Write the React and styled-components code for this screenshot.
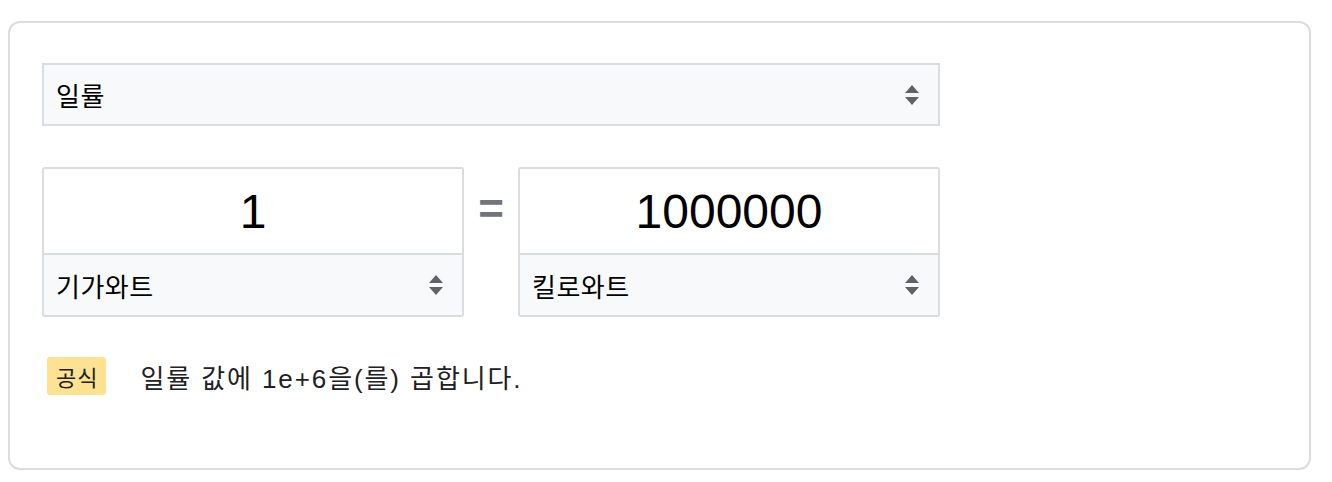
import React from "react";
import styled, { createGlobalStyle } from "styled-components";

const GlobalStyle = createGlobalStyle`
  body {
    margin: 8px;
    background: #fff;
    font-family: "Liberation Sans", Arial, "Noto Sans CJK KR", sans-serif;
    color: #202124;
  }
`;

const Arrows = () => (
  <svg width="16" height="22" viewBox="0 0 16 22">
    <path d="M1 9 L8 1 L15 9 Z" fill="#5f6368" />
    <path d="M1 13 L8 21 L15 13 Z" fill="#5f6368" />
  </svg>
);

const App = () => {
  return (
    <>
      <GlobalStyle />
      <Card>
        <Content>
          <Select tall>
            <SelectText>일률</SelectText>
            <Arrows />
          </Select>
          <ConverterRow>
            <UnitBox>
              <ValueInput>1</ValueInput>
              <Select>
                <SelectText>기가와트</SelectText>
                <Arrows />
              </Select>
            </UnitBox>
            <Equals>=</Equals>
            <UnitBox>
              <ValueInput>1000000</ValueInput>
              <Select>
                <SelectText>킬로와트</SelectText>
                <Arrows />
              </Select>
            </UnitBox>
          </ConverterRow>
          <FormulaRow>
            <Badge>공식</Badge>
            <FormulaText>일률 값에 1e+6을(를) 곱합니다.</FormulaText>
          </FormulaRow>
        </Content>
      </Card>
    </>
  );
};

const Card = styled.div`
  box-sizing: border-box;
  width: 1303px;
  height: 449px;
  margin-top: 13px;
  border: 2px solid #dadce0;
  border-radius: 12px;
  padding: 40px 32px;
`;

const Content = styled.div`
  width: 898px;
  display: flex;
  flex-direction: column;
`;

const Select = styled.div`
  box-sizing: border-box;
  display: flex;
  align-items: center;
  justify-content: space-between;
  height: ${(p) => (p.tall ? "63px" : "62px")};
  padding: 0 18px 0 12px;
  background: #f8f9fa;
  border: ${(p) => (p.tall ? "2px solid #dadce0" : "none")};
  ${(p) => (p.tall ? "" : "border-top: 2px solid #dadce0;")}
`;

const SelectText = styled.span`
  font-size: 26px;
  letter-spacing: 0.5px;
  color: #000;
`;

const ConverterRow = styled.div`
  display: flex;
  align-items: flex-start;
  margin-top: 41px;
`;

const UnitBox = styled.div`
  box-sizing: border-box;
  width: 422px;
  height: 150px;
  border: 2px solid #dadce0;
  border-radius: 3px;
  overflow: hidden;
  display: flex;
  flex-direction: column;
`;

const ValueInput = styled.div`
  height: 85px;
  display: flex;
  align-items: center;
  justify-content: center;
  font-size: 48px;
  color: #000;
  background: #fff;
`;

const Equals = styled.div`
  width: 54px;
  text-align: center;
  font-size: 44px;
  font-weight: bold;
  color: #70757a;
  line-height: 1;
  padding-top: 20px;
`;

const FormulaRow = styled.div`
  display: flex;
  align-items: center;
  margin-top: 40px;
  padding-left: 5px;
`;

const Badge = styled.span`
  background: #fde293;
  border-radius: 3px;
  font-size: 22px;
  letter-spacing: 1px;
  padding: 3px 8px 3px 9px;
  color: #202124;
`;

const FormulaText = styled.span`
  margin-left: 34px;
  font-size: 26px;
  letter-spacing: 1.9px;
  color: #202124;
`;

export default App;
